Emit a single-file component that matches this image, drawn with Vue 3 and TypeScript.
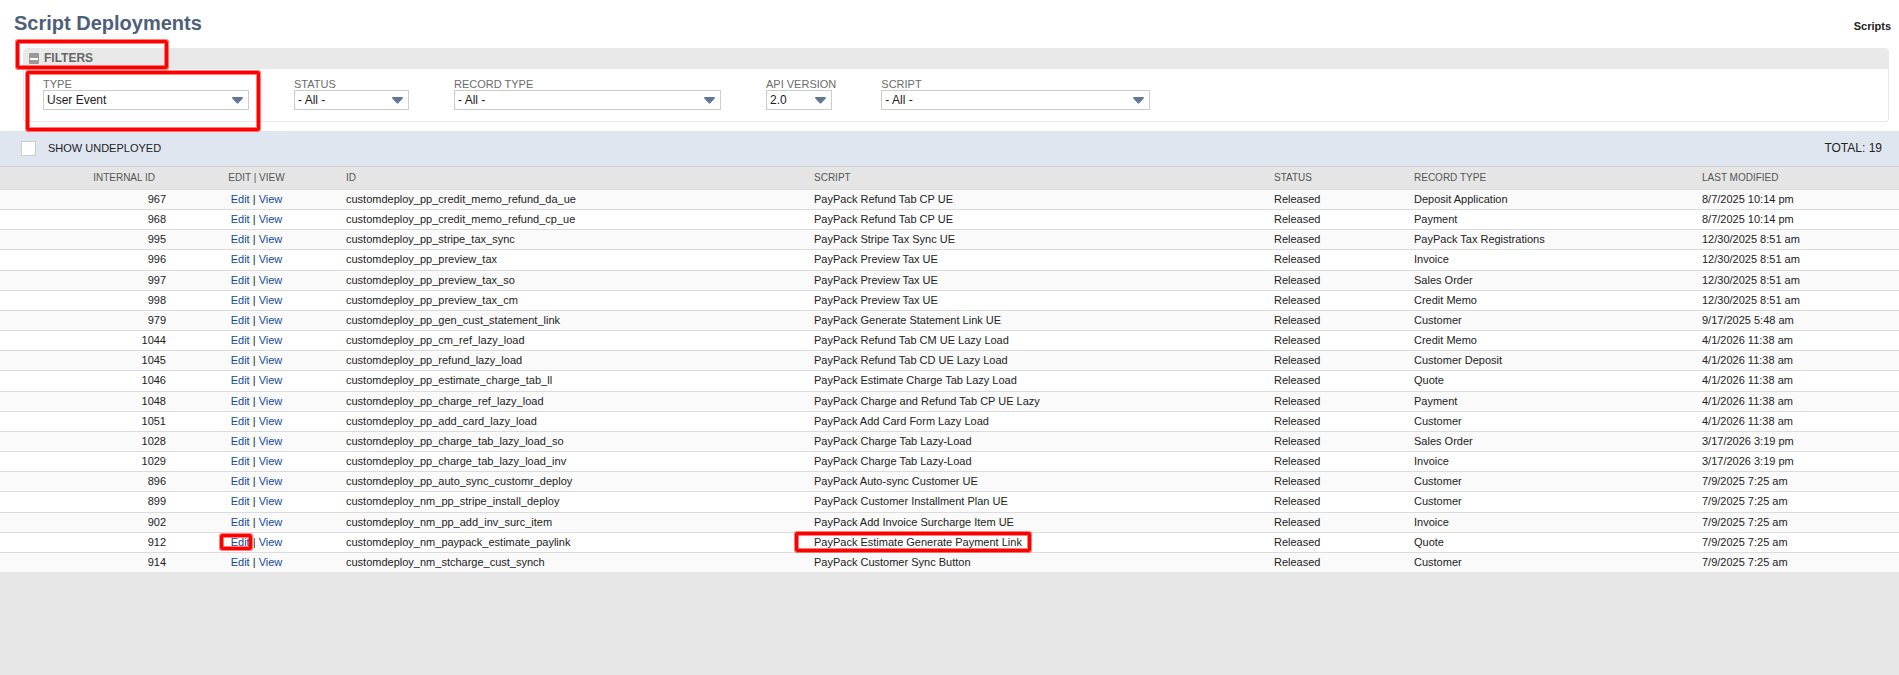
<script setup lang="ts">
import { ref } from 'vue'

interface Filter {
  id: string
  label: string
  value: string
  size: string
  marked?: boolean
}

interface Deployment {
  id: number
  scriptId: string
  script: string
  recordType: string
  modified: string
}

const open = ref(true)
const showUndeployed = ref(false)

const filters = ref<Filter[]>([
  { id: 'type', label: 'TYPE', value: 'User Event', size: 'w-type', marked: true },
  { id: 'status', label: 'STATUS', value: '- All -', size: 'w-status' },
  { id: 'record', label: 'RECORD TYPE', value: '- All -', size: 'w-record' },
  { id: 'api', label: 'API VERSION', value: '2.0', size: 'w-api' },
  { id: 'script', label: 'SCRIPT', value: '- All -', size: 'w-script' },
])

const markedId = 912

const row = (id: number, scriptId: string, script: string, recordType: string, modified: string): Deployment => ({
  id,
  scriptId: `customdeploy_${scriptId}`,
  script: `PayPack ${script}`,
  recordType,
  modified,
})

const deployments: Deployment[] = [
  row(967, 'pp_credit_memo_refund_da_ue', 'Refund Tab CP UE', 'Deposit Application', '8/7/2025 10:14 pm'),
  row(968, 'pp_credit_memo_refund_cp_ue', 'Refund Tab CP UE', 'Payment', '8/7/2025 10:14 pm'),
  row(995, 'pp_stripe_tax_sync', 'Stripe Tax Sync UE', 'PayPack Tax Registrations', '12/30/2025 8:51 am'),
  row(996, 'pp_preview_tax', 'Preview Tax UE', 'Invoice', '12/30/2025 8:51 am'),
  row(997, 'pp_preview_tax_so', 'Preview Tax UE', 'Sales Order', '12/30/2025 8:51 am'),
  row(998, 'pp_preview_tax_cm', 'Preview Tax UE', 'Credit Memo', '12/30/2025 8:51 am'),
  row(979, 'pp_gen_cust_statement_link', 'Generate Statement Link UE', 'Customer', '9/17/2025 5:48 am'),
  row(1044, 'pp_cm_ref_lazy_load', 'Refund Tab CM UE Lazy Load', 'Credit Memo', '4/1/2026 11:38 am'),
  row(1045, 'pp_refund_lazy_load', 'Refund Tab CD UE Lazy Load', 'Customer Deposit', '4/1/2026 11:38 am'),
  row(1046, 'pp_estimate_charge_tab_ll', 'Estimate Charge Tab Lazy Load', 'Quote', '4/1/2026 11:38 am'),
  row(1048, 'pp_charge_ref_lazy_load', 'Charge and Refund Tab CP UE Lazy', 'Payment', '4/1/2026 11:38 am'),
  row(1051, 'pp_add_card_lazy_load', 'Add Card Form Lazy Load', 'Customer', '4/1/2026 11:38 am'),
  row(1028, 'pp_charge_tab_lazy_load_so', 'Charge Tab Lazy-Load', 'Sales Order', '3/17/2026 3:19 pm'),
  row(1029, 'pp_charge_tab_lazy_load_inv', 'Charge Tab Lazy-Load', 'Invoice', '3/17/2026 3:19 pm'),
  row(896, 'pp_auto_sync_customr_deploy', 'Auto-sync Customer UE', 'Customer', '7/9/2025 7:25 am'),
  row(899, 'nm_pp_stripe_install_deploy', 'Customer Installment Plan UE', 'Customer', '7/9/2025 7:25 am'),
  row(902, 'nm_pp_add_inv_surc_item', 'Add Invoice Surcharge Item UE', 'Invoice', '7/9/2025 7:25 am'),
  row(912, 'nm_paypack_estimate_paylink', 'Estimate Generate Payment Link', 'Quote', '7/9/2025 7:25 am'),
  row(914, 'nm_stcharge_cust_synch', 'Customer Sync Button', 'Customer', '7/9/2025 7:25 am'),
]
</script>

<template>
  <main class="page">
    <header class="top">
      <h1>Script Deployments</h1>
      <a class="scripts" href="#">Scripts</a>
    </header>

    <section class="panel">
      <button class="panel-head" type="button" :aria-expanded="open" @click="open = !open">
        <svg width="10" height="11" viewBox="0 0 10 11" aria-hidden="true">
          <rect width="10" height="11" rx="1" fill="#999" />
          <rect x="1" y="5" width="8" height="2" fill="#fff" />
        </svg>
        <span>FILTERS</span>
        <i class="mark mark-filters"></i>
      </button>
      <div v-if="open" class="filters">
        <div v-for="f in filters" :key="f.id" class="field">
          <label :for="f.id">{{ f.label }}</label>
          <div class="select" :class="f.size">
            <select :id="f.id" v-model="f.value">
              <option>{{ f.value }}</option>
            </select>
            <svg width="11" height="7" viewBox="0 0 11 7" aria-hidden="true">
              <path d="M1 0H10Q11.500 .5 10.500 1.700L6.500 6Q5.500 7 4.500 6L.5 1.700Q-.5 .5 1 0Z" fill="#607799" />
            </svg>
          </div>
          <i v-if="f.marked" class="mark mark-type"></i>
        </div>
      </div>
    </section>

    <div class="bar">
      <label class="check">
        <input v-model="showUndeployed" type="checkbox" />
        <span>SHOW UNDEPLOYED</span>
      </label>
      <span class="total">TOTAL: {{ deployments.length }}</span>
    </div>

    <table>
      <colgroup>
        <col class="c-num" />
        <col class="c-links" />
        <col class="c-id" />
        <col class="c-script" />
        <col class="c-status" />
        <col class="c-record" />
        <col class="c-date" />
      </colgroup>
      <thead>
        <tr>
          <th class="num">INTERNAL ID</th>
          <th class="links">EDIT | VIEW</th>
          <th>ID</th>
          <th>SCRIPT</th>
          <th>STATUS</th>
          <th>RECORD TYPE</th>
          <th>LAST MODIFIED</th>
        </tr>
      </thead>
      <tbody>
        <tr v-for="d in deployments" :key="d.id">
          <td class="num">{{ d.id }}</td>
          <td class="links">
            <span class="anchor"><a href="#">Edit</a><i v-if="d.id === markedId" class="mark mark-edit"></i></span>
            | <a href="#">View</a>
          </td>
          <td>{{ d.scriptId }}</td>
          <td>
            <span class="anchor">{{ d.script }}<i v-if="d.id === markedId" class="mark mark-script"></i></span>
          </td>
          <td>Released</td>
          <td>{{ d.recordType }}</td>
          <td>{{ d.modified }}</td>
        </tr>
      </tbody>
    </table>
  </main>
</template>

<style>
body {
  background: #e6e6e6;
}
</style>

<style scoped>
.page {
  font-family: 'Liberation Sans', Arial, sans-serif;
  font-size: 11px;
  color: #222;
  background: #fff;
}
.page * {
  box-sizing: border-box;
}
a {
  color: #124a9c;
  text-decoration: none;
}
.top {
  display: flex;
  justify-content: space-between;
  align-items: baseline;
  padding: 11px 8px 0 14px;
  height: 48px;
}
h1 {
  margin: 0;
  font-size: 20px;
  line-height: 24px;
  color: #4d5f79;
}
.scripts {
  font-size: 11px;
  font-weight: bold;
  color: #222;
}
.panel {
  margin: 0 10px 0 23px;
  border: 1px solid #e9e9e9;
  border-top: 0;
  border-radius: 4px;
}
.panel-head {
  position: relative;
  display: flex;
  align-items: center;
  gap: 5px;
  width: 100%;
  height: 21px;
  padding: 0 5px 1px;
  border: 0;
  border-radius: 4px 4px 0 0;
  background: #e9e9e9;
  font: bold 12px/20px 'Liberation Sans', Arial, sans-serif;
  color: #666;
}
.filters {
  display: flex;
  gap: 45px;
  padding: 9px 19px 11px;
}
.field {
  position: relative;
}
.field label {
  display: block;
  font-size: 11px;
  line-height: 12px;
  color: #6b6b6b;
}
.select {
  display: grid;
  align-items: center;
}
.select select,
.select svg {
  grid-area: 1 / 1;
}
.select svg {
  justify-self: end;
  margin-right: 6px;
  pointer-events: none;
}
select {
  appearance: none;
  width: 100%;
  height: 20px;
  padding: 0 3px;
  border: 1px solid #ccc;
  border-radius: 0;
  background: #fff;
  font: 12px/16px 'Liberation Sans', Arial, sans-serif;
  color: #222;
}
.w-type {
  width: 206px;
}
.w-status {
  width: 115px;
}
.w-record {
  width: 267px;
}
.w-api {
  width: 66px;
}
.w-script {
  width: 269px;
}
.bar {
  display: flex;
  justify-content: space-between;
  align-items: center;
  height: 36px;
  margin-top: 9px;
  padding: 0 17px 1px 21px;
  border-bottom: 1px solid #ccc;
  background: #dfe6ef;
}
.check {
  display: flex;
  align-items: center;
  gap: 12px;
}
.check input {
  appearance: none;
  width: 15px;
  height: 15px;
  margin: 0;
  border: 1px solid #ccc;
  background: #fff;
}
.check input:checked {
  background: #607799;
}
.total {
  font-size: 12px;
}
table {
  width: 100%;
  table-layout: fixed;
  border-collapse: separate;
  border-spacing: 0;
}
.c-num {
  width: 170px;
}
.c-links {
  width: 172px;
}
.c-id {
  width: 468px;
}
.c-script {
  width: 460px;
}
.c-status {
  width: 140px;
}
.c-record {
  width: 288px;
}
.c-date {
  width: 201px;
}
th,
td {
  padding: 0 4px;
  text-align: left;
  white-space: nowrap;
}
th {
  height: 23px;
  border-bottom: 1px solid #dcdcdc;
  background: #e5e5e5;
  font-size: 10px;
  font-weight: normal;
  line-height: 12px;
  color: #555;
}
td {
  height: 20px;
  padding-bottom: 2px;
  border-bottom: 1px solid #dcdcdc;
  line-height: 12px;
}
tbody tr:nth-child(6n + 4) td {
  height: 21px;
}
tbody tr:nth-child(odd) {
  background: #fafafa;
}
tbody tr:last-child td {
  height: 19px;
  border-bottom: 0;
}
.num {
  text-align: right;
}
th.num {
  padding-right: 15px;
}
.links {
  padding-right: 3px;
  text-align: center;
}
.anchor {
  position: relative;
}
/* Red callout frames laid over the content */
.mark {
  position: absolute;
  border: 3px solid #f00;
  border-radius: 2px;
  box-shadow: 0 0 0 1px rgba(255, 0, 0, 0.5), inset 0 0 0 1px rgba(255, 0, 0, 0.5);
  pointer-events: none;
}
.mark-filters {
  top: -8px;
  left: -8px;
  width: 152px;
  height: 29px;
}
.mark-type {
  top: -7px;
  left: -17px;
  width: 234px;
  height: 60px;
}
.mark-edit {
  inset: -2px -2px -2px -11px;
}
.mark-script {
  inset: -4px -9px -4px -19px;
}
</style>
